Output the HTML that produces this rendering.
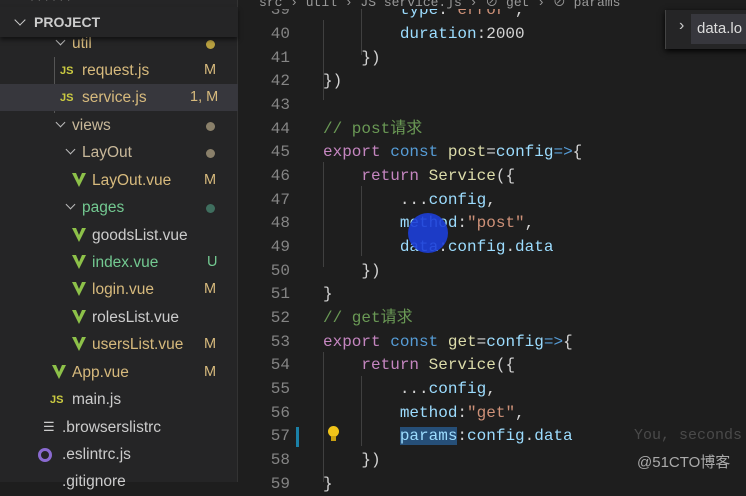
<!DOCTYPE html>
<html><head><meta charset="utf-8"><style>
*{margin:0;padding:0;box-sizing:border-box}
body{width:746px;height:482px;overflow:hidden;background:#1e1e1e;position:relative;font-family:"Liberation Sans","Noto Sans CJK SC",sans-serif}
#side{position:absolute;left:0;top:0;width:238px;height:482px;background:#252526;border-right:1px solid #333}
.hd{position:absolute;left:0;top:7px;width:238px;height:30px;background:#252526;box-shadow:0 3px 4px rgba(0,0,0,.5);color:#ccc;font-weight:bold;font-size:14px;line-height:30px;padding-left:34px;z-index:2}
.hd:before{content:"";position:absolute;left:16px;top:9px;width:7px;height:7px;border-right:1.5px solid #ccc;border-bottom:1.5px solid #ccc;transform:rotate(45deg)}
.r{position:absolute;left:0;width:238px;height:27px;font-size:15.5px;line-height:27px;color:#d7ba7d;margin-top:2px}
.r .t{position:absolute}
.r .b{position:absolute;left:204px;font-size:14.5px}
.dot{position:absolute;left:206px;top:10px;width:9px;height:9px;border-radius:50%;background:#8a806a}
.chev{position:absolute;top:7px;width:7px;height:7px;border-right:1.5px solid #bbb;border-bottom:1.5px solid #bbb;transform:rotate(45deg)}
.js{position:absolute;font-size:11px;font-weight:bold;color:#cbcb41}
.v{position:absolute;top:6px;width:0;height:0;border-left:7px solid transparent;border-right:7px solid transparent;border-top:14px solid #8dc149}
.v:after{content:"";position:absolute;left:-3px;top:-14px;border-left:3px solid transparent;border-right:3px solid transparent;border-top:7px solid #252526}
.sel{background:#37373d}
#code{position:absolute;left:239px;top:0;right:0;bottom:0;font-family:"Liberation Mono","Noto Sans CJK SC",monospace;font-size:16px}
.l{position:absolute;left:0;height:24px;line-height:24px;white-space:pre;color:#d4d4d4;margin-top:1px}
.n{display:inline-block;width:51px;text-align:right;color:#858585;margin-right:33px}
.k{color:#c586c0}.c{color:#569cd6}.f{color:#dcdcaa}.p{color:#9cdcfe}.s{color:#ce9178}.cm{color:#6a9955}.y{color:#4fc1ff}
.g{position:absolute;width:1px;background:#404040}
</style></head><body>
<div id="side">
<div style="position:absolute;left:30px;top:-8px;color:#888;font-size:12px">· · · · · ·</div>
<div class="hd">PROJECT</div>
<div style="position:absolute;left:54px;top:57px;width:1px;height:56px;background:#555"></div>
<div class="r" style="top:28px"><i class="chev" style="left:57px"></i><span class="t" style="left:72px">util</span><i class="dot" style="background:#b8a040"></i></div>
<div class="r" style="top:55px"><span class="js" style="left:60px;top:1px">JS</span><span class="t" style="left:82px">request.js</span><span class="b">M</span></div>
<div class="r sel" style="top:82px"><span class="js" style="left:60px;top:1px">JS</span><span class="t" style="left:82px">service.js</span><span class="b" style="left:190px">1, M</span></div>
<div class="r" style="top:110px;color:#c8b89a"><i class="chev" style="left:57px"></i><span class="t" style="left:72px">views</span><i class="dot"></i></div>
<div class="r" style="top:137px;color:#c8b89a"><i class="chev" style="left:67px"></i><span class="t" style="left:82px">LayOut</span><i class="dot"></i></div>
<div class="r" style="top:165px"><i class="v" style="left:72px"></i><span class="t" style="left:92px">LayOut.vue</span><span class="b">M</span></div>
<div class="r" style="top:192px;color:#73c991"><i class="chev" style="left:67px"></i><span class="t" style="left:82px">pages</span><i class="dot" style="background:#3f6e5e"></i></div>
<div class="r" style="top:220px;color:#ccc"><i class="v" style="left:72px"></i><span class="t" style="left:92px">goodsList.vue</span></div>
<div class="r" style="top:247px;color:#73c991"><i class="v" style="left:72px"></i><span class="t" style="left:92px">index.vue</span><span class="b" style="left:207px">U</span></div>
<div class="r" style="top:274px"><i class="v" style="left:72px"></i><span class="t" style="left:92px">login.vue</span><span class="b">M</span></div>
<div class="r" style="top:302px;color:#ccc"><i class="v" style="left:72px"></i><span class="t" style="left:92px">rolesList.vue</span></div>
<div class="r" style="top:329px"><i class="v" style="left:72px"></i><span class="t" style="left:92px">usersList.vue</span><span class="b">M</span></div>
<div class="r" style="top:357px"><i class="v" style="left:52px"></i><span class="t" style="left:72px">App.vue</span><span class="b">M</span></div>
<div class="r" style="top:384px;color:#ccc"><span class="js" style="left:50px;top:1px">JS</span><span class="t" style="left:72px">main.js</span></div>
<div class="r" style="top:412px;color:#ccc"><span class="t" style="left:43px;font-size:13px;top:-1px">☰</span><span class="t" style="left:62px">.browserslistrc</span></div>
<div class="r" style="top:439px;color:#ccc"><span style="position:absolute;left:38px;top:7px;width:14px;height:14px;border-radius:50%;border:3px solid #8a6ad0"></span><span class="t" style="left:62px">.eslintrc.js</span></div>
<div class="r" style="top:466px;color:#ccc"><span class="t" style="left:62px">.gitignore</span></div>
</div>
<div id="code">
<div class="g" style="left:84px;top:20px;height:80px"></div>
<div class="g" style="left:122px;top:0;height:55px"></div>
<div class="g" style="left:84px;top:162px;height:105px"></div>
<div class="g" style="left:122px;top:186px;height:70px"></div>
<div class="g" style="left:84px;top:352px;height:130px"></div>
<div class="g" style="left:122px;top:376px;height:70px"></div>
<div class="l" style="top:-3px"><span class="n">39</span>        <span class="p">type</span>:<span class="s">"error"</span>,</div>
<div class="l" style="top:21px"><span class="n">40</span>        <span class="p">duration</span>:2000</div>
<div class="l" style="top:45px"><span class="n">41</span>    })</div>
<div class="l" style="top:68px"><span class="n">42</span>})</div>
<div class="l" style="top:92px"><span class="n">43</span></div>
<div class="l" style="top:116px"><span class="n">44</span><span class="cm">// post请求</span></div>
<div class="l" style="top:139px"><span class="n">45</span><span class="k">export</span> <span class="c">const</span> <span class="f">post</span>=<span class="p">config</span><span class="c">=&gt;</span>{</div>
<div class="l" style="top:163px"><span class="n">46</span>    <span class="k">return</span> <span class="f">Service</span>({</div>
<div class="l" style="top:187px"><span class="n">47</span>        ...<span class="p">config</span>,</div>
<div class="l" style="top:210px"><span class="n">48</span>        <span class="p">method</span>:<span class="s">"post"</span>,</div>
<div class="l" style="top:234px"><span class="n">49</span>        <span class="p">data</span>:<span class="p">config</span>.<span class="p">data</span></div>
<div class="l" style="top:258px"><span class="n">50</span>    })</div>
<div class="l" style="top:281px"><span class="n">51</span>}</div>
<div class="l" style="top:305px"><span class="n">52</span><span class="cm">// get请求</span></div>
<div class="l" style="top:329px"><span class="n">53</span><span class="k">export</span> <span class="c">const</span> <span class="f">get</span>=<span class="p">config</span><span class="c">=&gt;</span>{</div>
<div class="l" style="top:352px"><span class="n">54</span>    <span class="k">return</span> <span class="f">Service</span>({</div>
<div class="l" style="top:376px"><span class="n">55</span>        ...<span class="p">config</span>,</div>
<div class="l" style="top:400px"><span class="n">56</span>        <span class="p">method</span>:<span class="s">"get"</span>,</div>
<div class="l" style="top:423px"><span class="n">57</span>        <span class="p" style="background:#264f78">params</span>:<span class="p">config</span>.<span class="p">data</span></div>
<div class="l" style="top:447px"><span class="n">58</span>    })</div>
<div class="l" style="top:471px"><span class="n">59</span>}</div>
<div style="position:absolute;left:0;top:0;width:520px;height:9px;background:#1e1e1e;overflow:hidden"><div style="position:absolute;left:20px;top:-9px;color:#999;font-size:13px;white-space:pre">src › util › JS service.js › ⊘ get › ⊘ params</div></div>
<div style="position:absolute;left:57px;top:427px;width:3px;height:20px;background:#1b81a8"></div>
<div style="position:absolute;left:89px;top:426px;width:11px;height:11px;border-radius:50%;background:#f0c419"></div>
<div style="position:absolute;left:92px;top:436px;width:5px;height:5px;background:#c9a010"></div>
<div style="position:absolute;left:395px;top:427px;color:#4a4a4a;font-size:15px;white-space:pre">You, seconds</div>
<div style="position:absolute;left:169px;top:213px;width:40px;height:40px;border-radius:50%;background:#1c3ed8;opacity:.9"></div>
<div style="position:absolute;left:426px;top:10px;width:90px;height:39px;background:#252526;border-left:1px solid #444;box-shadow:0 2px 6px #000"></div>
<div style="position:absolute;left:440px;top:17px;color:#ccc;font-size:16px;font-family:'Liberation Sans',sans-serif">›</div>
<div style="position:absolute;left:452px;top:14px;width:60px;height:30px;background:#37373d;color:#ddd;font-size:15px;line-height:30px;padding-left:6px;font-family:'Liberation Sans',sans-serif">data.lo</div>
<div style="position:absolute;left:398px;top:451px;color:#aaa;font-size:15px;font-family:'Liberation Sans','Noto Sans CJK SC',sans-serif">@51CTO博客</div>
</div>
</body></html>
